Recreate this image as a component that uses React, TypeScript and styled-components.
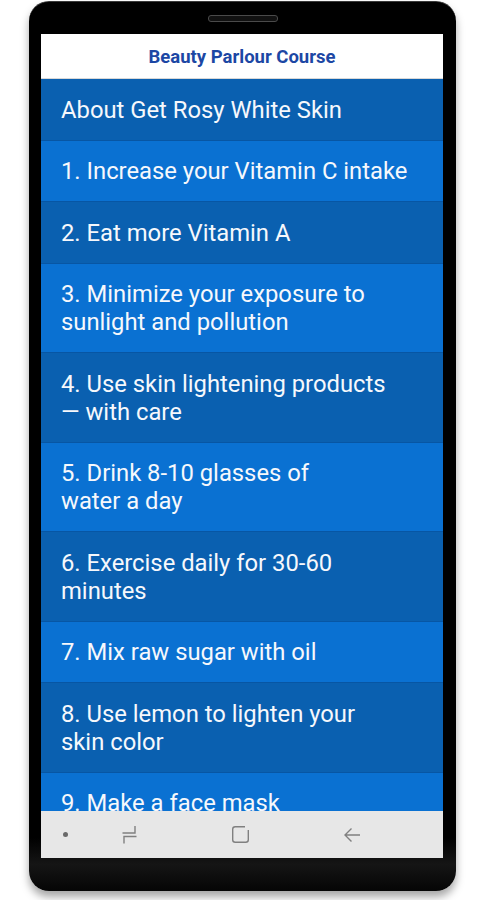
import React from 'react';
import styled, { createGlobalStyle } from 'styled-components';

const topics: string[][] = [
    ['About Get Rosy White Skin'],
    ['1. Increase your Vitamin C intake'],
    ['2. Eat more Vitamin A'],
    ['3. Minimize your exposure to', 'sunlight and pollution'],
    ['4. Use skin lightening products', '\u2014 with care'],
    ['5. Drink 8-10 glasses of', 'water a day'],
    ['6. Exercise daily for 30-60', 'minutes'],
    ['7. Mix raw sugar with oil'],
    ['8. Use lemon to lighten your', 'skin color'],
    ['9. Make a face mask'],
];

const App = () => {
    return (
        <>
            <GlobalStyle />
            <Page>
                <Phone>
                    <Speaker />
                    <Screen>
                        <Header>Beauty Parlour Course</Header>
                        <List>
                            {topics.map((lines, i) => (
                                <Row key={i} dark={i % 2 === 0}>
                                    {lines.map((l, j) => <Line key={j}>{l}</Line>)}
                                </Row>
                            ))}
                        </List>
                        <NavBar>
                            <NavSlot>
                                <NavDot />
                            </NavSlot>
                            <NavSlot>
                                <svg width="17" height="19" viewBox="0 0 17 19">
                                    <path d="M1.5 8 H14 V1" fill="none" stroke="#808080" strokeWidth="1.4" />
                                    <path d="M15.5 11.5 H3 V18.5" fill="none" stroke="#808080" strokeWidth="1.4" />
                                </svg>
                            </NavSlot>
                            <NavSlot>
                                <svg width="19" height="19" viewBox="0 0 19 19">
                                    <path d="M14 1.7 H4.2 Q1.7 1.7 1.7 4.2 V14.8 Q1.7 17.3 4.2 17.3 H14.8 Q17.3 17.3 17.3 14.8 V5" fill="none" stroke="#808080" strokeWidth="1.4" />
                                </svg>
                            </NavSlot>
                            <NavSlot>
                                <svg width="18" height="16" viewBox="0 0 18 16">
                                    <path d="M17 8 H2 M8.5 1.5 L2 8 L8.5 14.5" fill="none" stroke="#808080" strokeWidth="1.4" />
                                </svg>
                            </NavSlot>
                        </NavBar>
                    </Screen>
                </Phone>
            </Page>
        </>
    );
}

type RowProps = {
    dark: boolean;
};

const GlobalStyle = createGlobalStyle`
    html, body {
        margin: 0;
        padding: 0;
        background: #ffffff;
        font-family: Roboto, "Noto Sans", sans-serif;
    }
`;

const Page = styled.div`
    width: 483px;
    height: 900px;
    padding: 1px 0 0 29px;
    box-sizing: border-box;
    overflow: hidden;
`;

const Phone = styled.div`
    width: 427px;
    height: 890px;
    box-sizing: border-box;
    padding: 32px 13px 33px 12px;
    background: linear-gradient(to bottom, #000000 0%, #000000 94%, #151515 97%, #050505 100%);
    border-top: 1px solid #3a3a3a;
    border-radius: 20px;
    box-shadow: 0 6px 8px rgba(0, 0, 0, 0.35);
    display: flex;
    flex-direction: column;
    position: relative;
`;

const Speaker = styled.div`
    position: absolute;
    top: 13px;
    left: 179px;
    width: 68px;
    height: 5px;
    border-radius: 3px;
    border: 1px solid #4a4a4a;
    background: #111111;
`;

const Screen = styled.div`
    flex: 1;
    display: flex;
    flex-direction: column;
    overflow: hidden;
    background: #e7e7e7;
`;

const Header = styled.div`
    height: 45px;
    flex-shrink: 0;
    box-sizing: border-box;
    background: #ffffff;
    display: flex;
    align-items: center;
    justify-content: center;
    padding-top: 2px;
    color: #1c47a4;
    font-weight: bold;
    font-size: 18.5px;
    border-bottom: 1px solid #d8d8d8;
`;

const List = styled.div`
    flex: 1;
    overflow: hidden;
    display: flex;
    flex-direction: column;
`;

const Row = styled.div<RowProps>`
    flex-shrink: 0;
    padding: 16.5px 20px 16px 20px;
    background: ${props => props.dark ? '#0a60b0' : '#0a71d2'};
    border-bottom: 1px solid #0756a4;
    color: #f6f8fc;
    font-size: 23.8px;
    line-height: 28px;
`;

const Line = styled.div`
    white-space: nowrap;
`;

const NavBar = styled.div`
    height: 47px;
    flex-shrink: 0;
    background: #e7e7e7;
    display: grid;
    grid-template-columns: 48px 80px 142px 82px;
    align-items: center;
`;

const NavSlot = styled.div`
    display: flex;
    justify-content: center;
    align-items: center;
`;

const NavDot = styled.div`
    width: 5px;
    height: 5px;
    border-radius: 50%;
    background: #6a6a6a;
`;

export default App;
